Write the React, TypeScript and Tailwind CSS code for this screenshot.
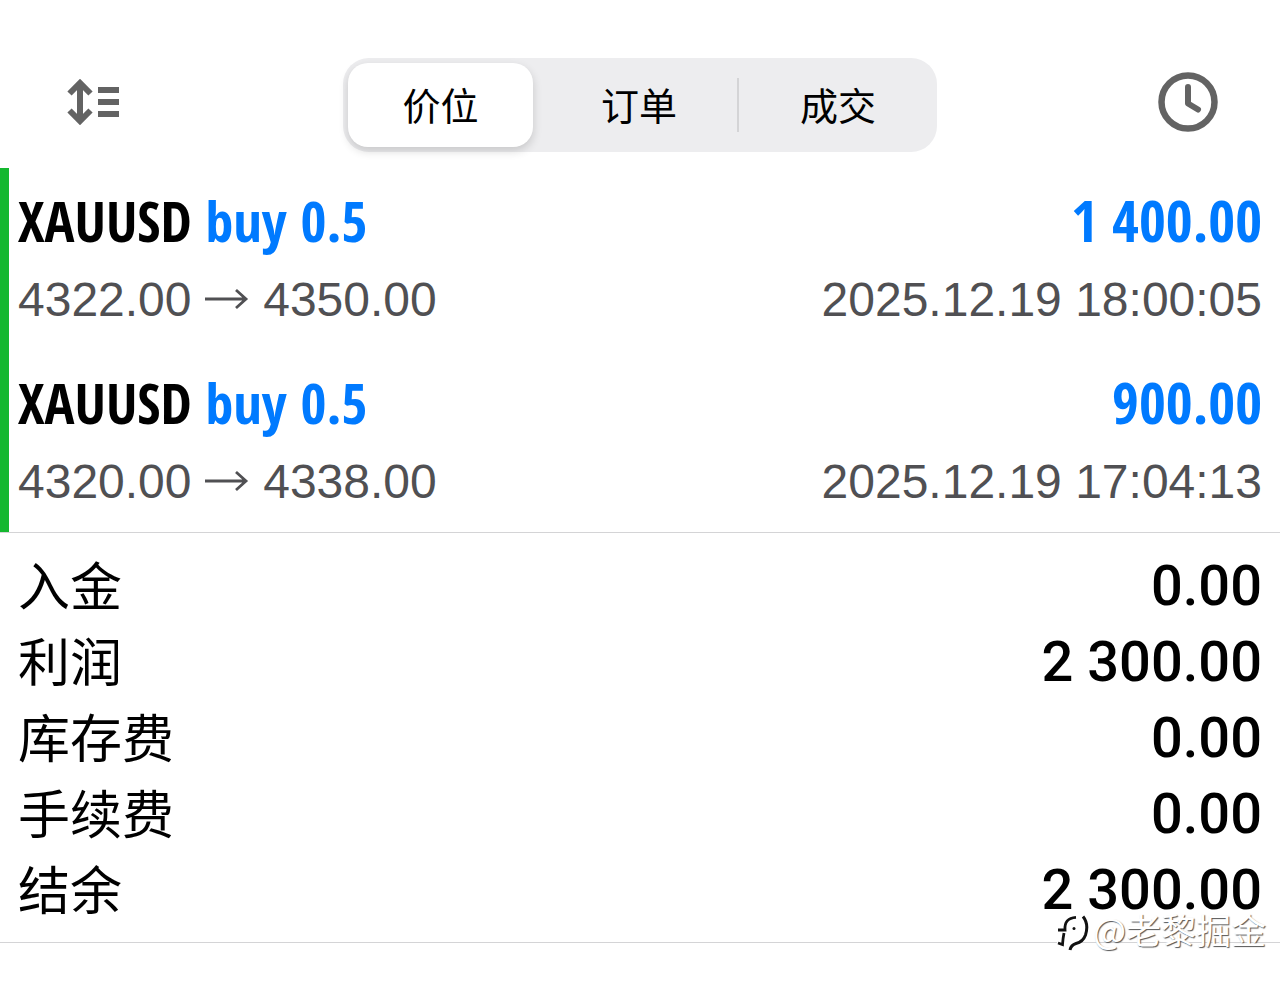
import React, { useState } from 'react';

interface Deal {
  id: number;
  symbol: string;
  side: string;
  open: string;
  close: string;
  profit: string;
  time: string;
}

const tabs = ['价位', '订单', '成交'];

const deals: Deal[] = [
  { id: 1, symbol: 'XAUUSD', side: 'buy 0.5', open: '4322.00', close: '4350.00', profit: '1 400.00', time: '2025.12.19 18:00:05' },
  { id: 2, symbol: 'XAUUSD', side: 'buy 0.5', open: '4320.00', close: '4338.00', profit: '900.00', time: '2025.12.19 17:04:13' },
];

const totals = [
  { label: '入金', value: '0.00' },
  { label: '利润', value: '2 300.00' },
  { label: '库存费', value: '0.00' },
  { label: '手续费', value: '0.00' },
  { label: '结余', value: '2 300.00' },
];

const SortIcon = () => (
  <svg className="h-[46px] w-[53px]" viewBox="0 0 53 46" fill="none" stroke="#636363" strokeWidth="6">
    <path d="M14 4v38M3.500 14.500L14 4 24.500 14.500M3.500 31.500L14 42 24.500 31.500" />
    <path d="M32 11h21M32 23h21M32 35h21" />
  </svg>
);

const ClockIcon = () => (
  <svg className="size-[60px]" viewBox="0 0 60 60" fill="none" stroke="#636363" strokeLinecap="round" strokeLinejoin="round">
    <circle cx="30" cy="30" r="26.500" strokeWidth="6.500" />
    <path d="M30 15v16.500l10 6" strokeWidth="6" />
  </svg>
);

const ArrowIcon = () => (
  <svg className="inline-block h-[22px] w-[45px] align-[6px]" viewBox="0 0 45 22" fill="none" stroke="#505053" strokeWidth="2.800">
    <path d="M-2 11h43M31 2l10 9-10 9" />
  </svg>
);

const DealRow = ({ deal }: { deal: Deal }) => (
  <li className="pt-[22px] pb-[18px] pl-[9px] pr-[18px]">
    <div className="flex items-center justify-between text-[56px] leading-[60px] font-semibold font-['Open_Sans_Condensed','Noto_Sans_Condensed','Liberation_Sans_Narrow','Roboto_Condensed',sans-serif]">
      <span>
        {deal.symbol} <span className="text-[#007aff]">{deal.side}</span>
      </span>
      <span className="text-[58px] text-[#007aff]">{deal.profit}</span>
    </div>
    <div className="mt-[18px] flex items-center justify-between text-[48px] leading-[64px] text-[#505053] font-['Liberation_Sans',sans-serif]">
      <span>
        {deal.open} <ArrowIcon /> {deal.close}
      </span>
      <time>{deal.time}</time>
    </div>
  </li>
);

const Watermark = () => (
  <div className="absolute right-[14px] -bottom-[10px] flex items-center gap-1 text-[35px] leading-[46px] text-white [text-shadow:1px_1px_1px_#555] font-['Noto_Sans_CJK_SC',sans-serif]">
    <svg className="mt-2 h-[38px] w-8" viewBox="0 0 32 38" fill="none">
      <path d="M0 14L7 4Q16-2 26 1 33 12 27 25L14 36 0 31z" fill="#fff" />
      <path d="M1 16h7Q7 4 19 3.300M7 19Q6 24 5.500 30.500L1 29" stroke="#111" strokeWidth="2.800" />
      <path d="M26 2.500Q32 10 28.500 21 26 28 19 29.500 14 31 13 36" stroke="#111" strokeWidth="3" />
      <circle cx="17" cy="14.500" r="1.500" fill="#111" />
    </svg>
    <span>@老黎掘金</span>
  </div>
);

const App: React.FC = () => {
  const [active, setActive] = useState(0);

  return (
    <main className="min-h-screen bg-white text-black">
      <header className="grid grid-cols-[1fr_auto_1fr] items-center px-[62px] pt-[58px] pb-4">
        <button aria-label="排序" className="justify-self-start pl-1 pb-1.5">
          <SortIcon />
        </button>
        <div role="tablist" className="grid h-[94px] w-[594px] grid-cols-3 rounded-[26px] bg-[#ededef] font-['Noto_Sans_CJK_SC',sans-serif]">
          {tabs.map((tab, i) => (
            <div key={tab} className="flex items-center">
              <button
                role="tab"
                aria-selected={active === i}
                onClick={() => setActive(i)}
                className={
                  active === i
                    ? 'ml-[5px] mr-2 h-[84px] flex-1 rounded-[20px] bg-white pb-1 text-[38px] shadow-[0_4px_10px_rgba(0,0,0,0.16)]'
                    : 'h-[84px] flex-1 pb-1 text-[38px]'
                }
              >
                {tab}
              </button>
              {/* Разделитель между неактивными вкладками */}
              {i < tabs.length - 1 && active !== i && active !== i + 1 && (
                <span className="h-[54px] w-[2px] bg-[#d4d4d6]"></span>
              )}
            </div>
          ))}
        </div>
        <button aria-label="历史" className="justify-self-end pb-1.5">
          <ClockIcon />
        </button>
      </header>

      <ul className="border-l-[9px] border-[#14b82f]">
        {deals.map((deal) => (
          <DealRow key={deal.id} deal={deal} />
        ))}
      </ul>

      <section className="relative border-y border-[#d4d4d6] pt-[15px] pb-[14px] pl-[18px] pr-[18px]">
        <dl>
          {totals.map((item) => (
            <div key={item.label} className="flex h-[76px] items-center justify-between">
              <dt className="pb-1 text-[52px] leading-[72px] font-['Noto_Sans_CJK_SC',sans-serif]">{item.label}</dt>
              <dd className="text-[56px] leading-[76px] font-medium font-['Roboto',sans-serif]">{item.value}</dd>
            </div>
          ))}
        </dl>
        <Watermark />
      </section>
    </main>
  );
};

export default App;
